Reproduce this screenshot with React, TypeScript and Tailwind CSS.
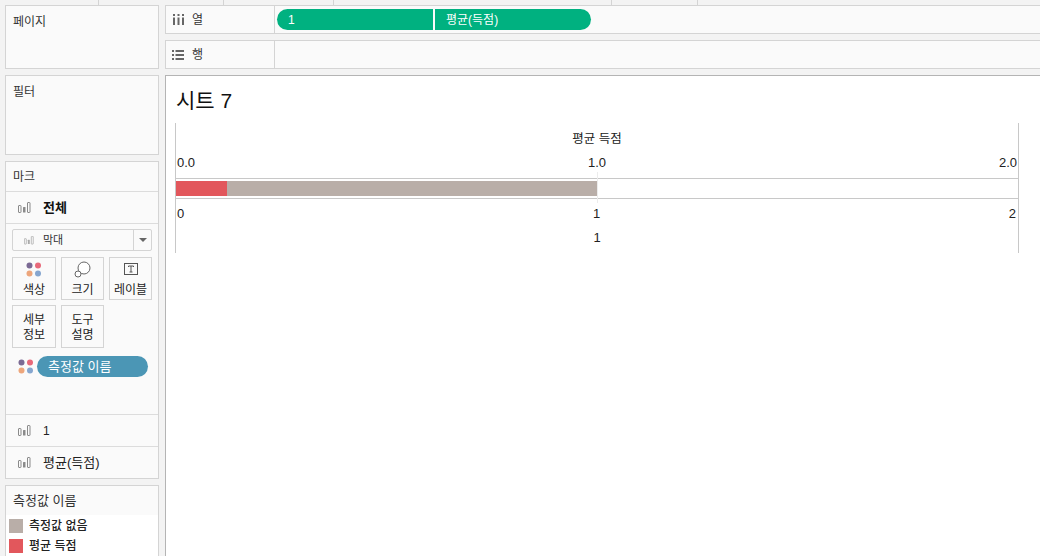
import React from 'react';

const FONT = '"Liberation Sans", "Noto Sans CJK KR", sans-serif';

const BarsIcon = ({ className = 'text-[#8a8a8a]', size = 13 }: { className?: string; size?: number }) => (
  <svg width={size} height={(size * 11) / 13} viewBox="0 0 13 11" className={className} fill="none" stroke="currentColor" strokeWidth="1">
    <rect x="0.5" y="3.5" width="2.5" height="7" rx="0.5" />
    <rect x="5" y="5" width="2.5" height="5.5" rx="0.5" fill="currentColor" stroke="none" />
    <rect x="9.5" y="0.5" width="2.5" height="10" rx="0.5" />
  </svg>
);

const ColorDots = () => (
  <svg width="17" height="15" viewBox="0 0 17 15">
    <circle cx="3.5" cy="3.5" r="3" fill="#7b6a94" />
    <circle cx="12" cy="3.5" r="3" fill="#e8697a" />
    <circle cx="3.5" cy="11.5" r="3" fill="#eda67c" />
    <circle cx="12" cy="11.5" r="3" fill="#86a6cf" />
  </svg>
);

const SizeIcon = () => (
  <svg width="17" height="17" viewBox="0 0 17 17" fill="#fff" stroke="#666" strokeWidth="1">
    <circle cx="10" cy="7" r="6" />
    <circle cx="4" cy="13" r="3" />
  </svg>
);

const LabelIcon = () => (
  <svg width="14" height="12" viewBox="0 0 14 12" fill="none" stroke="#555">
    <rect x="0.5" y="0.5" width="13" height="11" />
    <path d="M4.5 4V3H9.5V4M7 3V9M5.5 9H8.5" />
  </svg>
);

const MarkButton = ({ icon, lines }: { icon?: React.ReactNode; lines: string[] }) => (
  <div className={`h-[43px] border border-[#d4d4d4] flex flex-col items-center justify-center text-[12px] leading-[15px] text-[#222] ${icon ? '' : 'pt-[2px]'}`}>
    {icon && <div className="h-[20px] flex items-center justify-center mb-[4px]">{icon}</div>}
    {lines.map(l => <span key={l} className="whitespace-nowrap">{l}</span>)}
  </div>
);

const Panel = ({ className, children }: { className?: string; children?: React.ReactNode }) => (
  <div className={`bg-[#fafafa] border border-[#d4d4d4] shrink-0 ${className ?? ''}`}>{children}</div>
);

const Shelf = ({ icon, label, children }: { icon: React.ReactNode; label: string; children?: React.ReactNode }) => (
  <div className="h-[29px] bg-[#fafafa] border-y border-l border-[#d4d4d4] flex items-stretch">
    <div className="w-[109px] border-r border-[#d4d4d4] flex items-center pl-[6px] gap-[8px] text-[12px] text-[#333] shrink-0">
      <span className="w-[12px] flex justify-center">{icon}</span>
      <span>{label}</span>
    </div>
    <div className="flex items-center pl-[2px]">{children}</div>
  </div>
);

export default function App() {
  return (
    <div className="w-[1040px] h-[556px] overflow-hidden bg-[#f3f3f3] flex flex-col" style={{ fontFamily: FONT }}>
      {/* top strip with tab ticks */}
      <div className="h-[5px] shrink-0 flex pl-[98px]">
        <div className="w-[126px] border-l border-r border-[#d4d4d4]" />
        <div className="w-[110px] border-r border-[#d4d4d4]" />
        <div className="w-[278px] border-r border-[#d4d4d4]" />
        <div className="w-[86px] border-r border-[#d4d4d4]" />
      </div>

      <div className="flex flex-1 min-h-0 pl-[5px] gap-[6px]">
        {/* left column */}
        <div className="w-[154px] shrink-0 flex flex-col gap-[6px]">
          <Panel className="h-[64px] px-[7px] pt-[8px] text-[12px] leading-[16px] text-[#333]">페이지</Panel>
          <Panel className="h-[80px] px-[7px] pt-[8px] text-[12px] leading-[16px] text-[#333]">필터</Panel>

          <Panel className="h-[318px] flex flex-col">
            <div className="h-[30px] px-[7px] pt-[1px] flex items-center text-[12px] text-[#333] border-b border-[#dcdcdc] shrink-0">마크</div>
            <div className="h-[32px] pl-[12px] flex items-center gap-[12px] text-[13px] font-bold text-[#111] border-b border-[#dcdcdc] shrink-0">
              <BarsIcon />
              <span>전체</span>
            </div>
            <div className="px-[6px] pt-[5px] flex-1 border-b border-[#dcdcdc]">
              <div className="h-[22px] w-[140px] border border-[#d4d4d4] rounded-[2px] flex items-center">
                <div className="flex-1 flex items-center pl-[11px] gap-[9px] pt-[1px] text-[11px] text-[#333]">
                  <BarsIcon className="text-[#aaa]" size={10} />
                  <span>막대</span>
                </div>
                <div className="w-[18px] h-full border-l border-[#d4d4d4] flex items-center justify-center">
                  <div className="w-0 h-0 border-l-[4px] border-r-[4px] border-t-[4px] border-l-transparent border-r-transparent border-t-[#666]" />
                </div>
              </div>
              <div className="grid grid-cols-[44px_43px_43px] gap-[5px] mt-[6px]">
                <MarkButton icon={<ColorDots />} lines={['색상']} />
                <MarkButton icon={<SizeIcon />} lines={['크기']} />
                <MarkButton icon={<LabelIcon />} lines={['레이블']} />
                <MarkButton lines={['세부', '정보']} />
                <MarkButton lines={['도구', '설명']} />
              </div>
              <div className="flex items-center mt-[8px] pl-[6px] gap-[2px]">
                <ColorDots />
                <div className="w-[111px] h-[21px] rounded-full bg-[#4b96b5] text-white text-[13px] flex items-center pl-[11px]">측정값 이름</div>
              </div>
            </div>
            <div className="h-[32px] pl-[12px] flex items-center gap-[12px] text-[12px] text-[#222] border-b border-[#dcdcdc] shrink-0">
              <BarsIcon />
              <span className="pt-[1px]">1</span>
            </div>
            <div className="h-[31px] pl-[12px] flex items-center gap-[12px] text-[13px] text-[#222] shrink-0">
              <BarsIcon />
              <span>평균(득점)</span>
            </div>
          </Panel>

          <Panel className="h-[80px]">
            <div className="h-[29px] px-[7px] pt-[1px] flex items-center text-[13px] text-[#333]">측정값 이름</div>
            <div className="bg-white h-[50px] pl-[3px] text-[12px] font-medium text-[#222]">
              <div className="h-[20px] flex items-center gap-[6px] pt-[2px]">
                <span className="w-[14px] h-[14px] bg-[#b9aea8]" />
                측정값 없음
              </div>
              <div className="h-[20px] flex items-center gap-[6px] pt-[2px]">
                <span className="w-[14px] h-[14px] bg-[#e2575c]" />
                평균 득점
              </div>
            </div>
          </Panel>
        </div>

        {/* right column */}
        <div className="flex-1 min-w-0 flex flex-col gap-[6px]">
          <Shelf
            label="열"
            icon={
              <svg width="11" height="11" viewBox="0 0 11 11" fill="#666">
                <rect x="0" y="0" width="2" height="2" />
                <rect x="4.5" y="0" width="2" height="2" />
                <rect x="9" y="0" width="2" height="2" />
                <rect x="0" y="3.5" width="2" height="7.5" />
                <rect x="4.5" y="3.5" width="2" height="7.5" />
                <rect x="9" y="3.5" width="2" height="7.5" />
              </svg>
            }
          >
            <div className="flex gap-[2px] text-white text-[12px]">
              <div className="w-[156px] h-[21px] bg-[#00b180] rounded-l-full pl-[11px] flex items-center">1</div>
              <div className="w-[156px] h-[21px] bg-[#00b180] rounded-r-full pl-[11px] flex items-center">평균(득점)</div>
            </div>
          </Shelf>
          <Shelf
            label="행"
            icon={
              <svg width="12" height="10" viewBox="0 0 12 10" fill="#666">
                <rect x="0" y="0" width="2" height="2" />
                <rect x="3.5" y="0" width="8.5" height="2" />
                <rect x="0" y="4" width="2" height="2" />
                <rect x="3.5" y="4" width="8.5" height="2" />
                <rect x="0" y="8" width="2" height="2" />
                <rect x="3.5" y="8" width="8.5" height="2" />
              </svg>
            }
          />

          {/* view */}
          <div className="flex-1 bg-white border-t border-l border-[#b4b4b4] pl-[9px]">
            <div className="h-[47px] pl-[1px] pt-[10px] text-[21px] leading-[30px] text-[#111]">시트 7</div>
            <div className="w-[844px] h-[130px] border-x border-[#c8c8c8] flex flex-col text-[13px] text-[#222]">
              <div className="h-[30px] pt-[8px] leading-[16px] text-center text-[12.5px]">평균 득점</div>
              <div className="h-[25px] flex justify-between items-start pl-px pr-px">
                <span>0.0</span>
                <span>1.0</span>
                <span>2.0</span>
              </div>
              <div className="relative h-[21px] border-y border-[#c8c8c8] flex items-center">
                <div className="h-[15px] w-[51px] bg-[#e2575c]" />
                <div className="h-[15px] w-[370px] bg-[#b9aea8]" />
                <div className="absolute left-[421px] top-[-7px] h-[31px] w-px bg-[#ececec]" />
              </div>
              <div className="h-[28px] pt-[1px] flex justify-between items-center pl-px pr-[2px]">
                <span>0</span>
                <span>1</span>
                <span>2</span>
              </div>
              <div className="h-[20px] pt-[1px] flex justify-center items-center">1</div>
            </div>
          </div>
        </div>
      </div>
    </div>
  );
}
